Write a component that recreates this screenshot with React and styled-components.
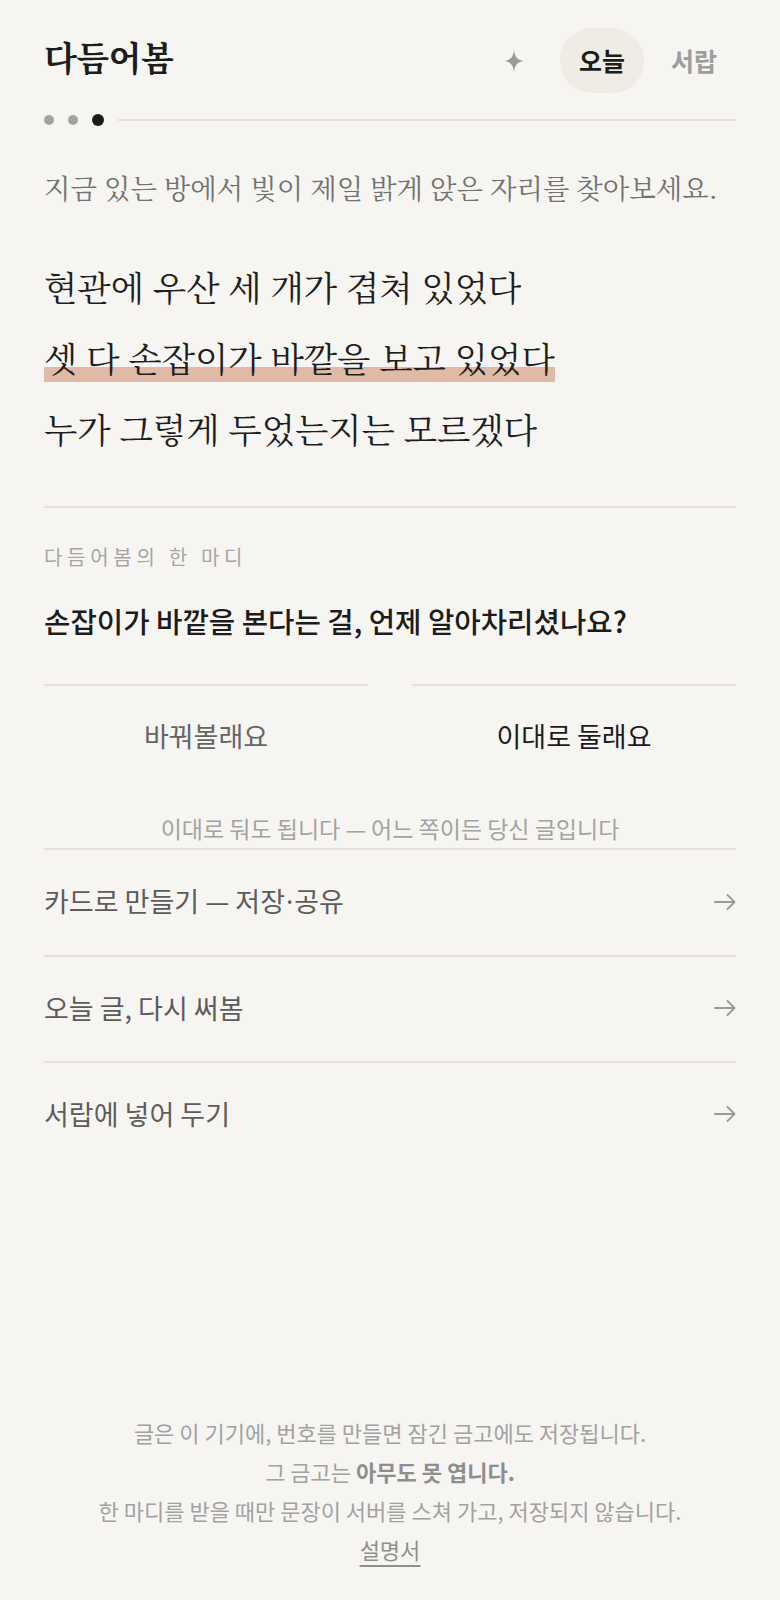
import React from 'react'
import styled, { createGlobalStyle } from 'styled-components'

const GlobalStyle = createGlobalStyle`
  html, body {
    margin: 0;
    padding: 0;
    background: #f7f5f1;
  }
  body {
    font-family: "Noto Sans CJK KR", "Noto Sans", sans-serif;
    color: #1c1c1c;
  }
`

const serif = `"Noto Serif CJK KR", "Noto Serif KR", "Noto Sans CJK KR", serif`

const Page = styled.div`
  min-height: 100vh;
  box-sizing: border-box;
  padding: 0 44px 31px;
  display: flex;
  flex-direction: column;
`

const Header = styled.header`
  display: flex;
  align-items: baseline;
  justify-content: space-between;
  padding-top: 28px;
`

const Title = styled.h1`
  margin: 0;
  font-family: ${serif};
  font-size: 34px;
  font-weight: 700;
  letter-spacing: -0.5px;
`

const Nav = styled.nav`
  display: flex;
  align-items: baseline;
  gap: 8px;
`

const Sparkle = styled.span`
  align-self: center;
  display: flex;
  margin-right: 28px;
  color: #9b9b9b;
`

const Tab = styled.button`
  border: 0;
  font: inherit;
  font-size: 25px;
  font-weight: 700;
  line-height: 25px;
  padding: 20px 19px;
  border-radius: 32px;
  cursor: pointer;
  background: ${p => (p.$active ? '#efece6' : 'transparent')};
  color: ${p => (p.$active ? '#1c1c1c' : '#9d9d9d')};
`

const Progress = styled.div`
  display: flex;
  align-items: center;
  gap: 14px;
  margin-top: 21px;
`

const Dot = styled.span`
  width: ${p => (p.$current ? 12 : 10)}px;
  height: ${p => (p.$current ? 12 : 10)}px;
  border-radius: 50%;
  background: ${p => (p.$current ? '#1a1a1a' : '#a3a3a3')};
`

const Track = styled.span`
  flex: 1;
  height: 2px;
  background: #e6e1da;
`

const Prompt = styled.p`
  margin: 43px 0 0;
  font-family: ${serif};
  font-size: 27.4px;
  line-height: 36px;
  font-weight: 400;
  color: #727272;
`

const Poem = styled.div`
  margin-top: 46px;
  padding-bottom: 42px;
  border-bottom: 2px solid #e6e1da;
`

const Line = styled.p`
  margin: 0;
  font-family: ${serif};
  font-size: 34.5px;
  line-height: 71px;
  color: #1e1e1e;
`

const Mark = styled.span`
  background: linear-gradient(to bottom, transparent 70%, #e0b9a7 70%);
`

const Label = styled.div`
  margin-top: 35px;
  font-size: 20px;
  line-height: 28px;
  letter-spacing: 4.7px;
  color: #a5a5a5;
`

const Question = styled.p`
  margin: 31px 0 0;
  font-size: 28.7px;
  line-height: 38px;
  font-weight: 500;
  color: #1c1c1c;
`

const Choices = styled.div`
  display: grid;
  grid-template-columns: 1fr 1fr;
  gap: 44px;
  margin-top: 44px;
`

const Choice = styled.button`
  border: 0;
  border-top: 2px solid #e6e1da;
  background: transparent;
  font: inherit;
  font-size: 27px;
  line-height: 38px;
  padding: 31px 0 0;
  cursor: pointer;
  color: ${p => (p.$strong ? '#1c1c1c' : '#656565')};
`

const Hint = styled.p`
  margin: 57px 0 0;
  text-align: center;
  font-size: 23px;
  line-height: 32px;
  color: #a3a3a3;
`

const Menu = styled.ul`
  list-style: none;
  margin: 4px 0 0;
  padding: 0;
`

const Item = styled.li`
  display: flex;
  align-items: center;
  justify-content: space-between;
  border-top: 2px solid #e6e1da;
  padding: 32px 0 34px;
  font-size: 27px;
  line-height: 38px;
  color: #5c5c5c;
  cursor: pointer;
`

const Dotted = styled.span`
  font-family: "Noto Sans", sans-serif;
  margin: 0 1px;
`

const Footer = styled.footer`
  margin-top: auto;
  text-align: center;
  font-size: 22px;
  line-height: 39px;
  color: #a2a2a2;
`

const Strong = styled.b`
  font-weight: 700;
  color: #8e8e8e;
`

const Manual = styled.a`
  color: #8f8f8f;
  text-decoration: underline;
  text-underline-offset: 6px;
  text-decoration-thickness: 2px;
`

const StarIcon = () => (
  <svg width="20" height="22" viewBox="0 0 20 22" fill="currentColor">
    <path d="M10 0 C11 7 13 10 20 11 C13 12 11 15 10 22 C9 15 7 12 0 11 C7 10 9 7 10 0 Z" />
  </svg>
)

const Arrow = () => (
  <svg width="22" height="16" viewBox="0 0 22 16" fill="none" stroke="#999" strokeWidth="1.8" strokeLinecap="round" strokeLinejoin="round">
    <path d="M1 8 H20.5 M13.5 1 L20.5 8 L13.5 15" />
  </svg>
)

const menu = [
  <>카드로 만들기 — 저장<Dotted>·</Dotted>공유</>,
  '오늘 글, 다시 써봄',
  '서랍에 넣어 두기',
]

export default function App() {
  return (
    <>
      <GlobalStyle />
      <Page>
        <Header>
          <Title>다듬어봄</Title>
          <Nav>
            <Sparkle><StarIcon /></Sparkle>
            <Tab $active>오늘</Tab>
            <Tab>서랍</Tab>
          </Nav>
        </Header>

        <Progress>
          <Dot />
          <Dot />
          <Dot $current />
          <Track />
        </Progress>

        <Prompt>지금 있는 방에서 빛이 제일 밝게 앉은 자리를 찾아보세요.</Prompt>

        <Poem>
          <Line>현관에 우산 세 개가 겹쳐 있었다</Line>
          <Line><Mark>셋 다 손잡이가 바깥을 보고 있었다</Mark></Line>
          <Line>누가 그렇게 두었는지는 모르겠다</Line>
        </Poem>

        <Label>다듬어봄의 한 마디</Label>
        <Question>손잡이가 바깥을 본다는 걸, 언제 알아차리셨나요?</Question>

        <Choices>
          <Choice>바꿔볼래요</Choice>
          <Choice $strong>이대로 둘래요</Choice>
        </Choices>

        <Hint>이대로 둬도 됩니다 — 어느 쪽이든 당신 글입니다</Hint>

        <Menu>
          {menu.map((label, i) => (
            <Item key={i}>
              <span>{label}</span>
              <Arrow />
            </Item>
          ))}
        </Menu>

        <Footer>
          글은 이 기기에, 번호를 만들면 잠긴 금고에도 저장됩니다.<br />
          그 금고는 <Strong>아무도 못 엽니다.</Strong><br />
          한 마디를 받을 때만 문장이 서버를 스쳐 가고, 저장되지 않습니다.<br />
          <Manual>설명서</Manual>
        </Footer>
      </Page>
    </>
  )
}
